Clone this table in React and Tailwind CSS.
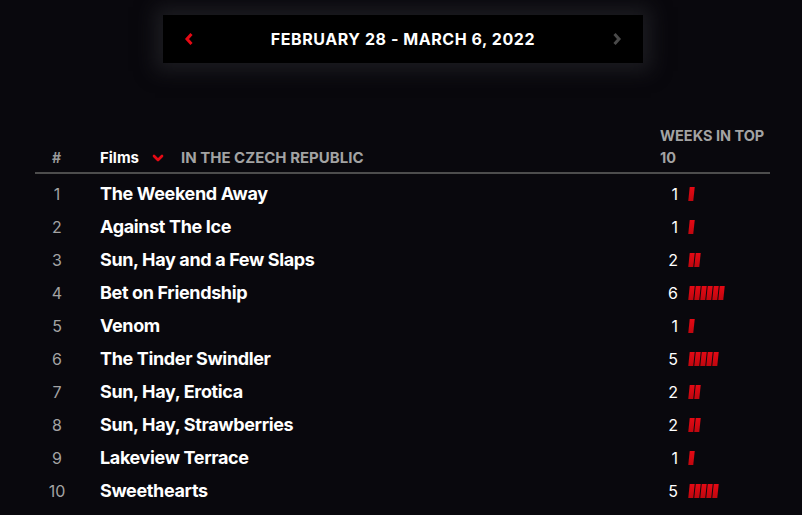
import { ChevronDown } from "lucide-react";

const rows = [
  { rank: 1, title: "The Weekend Away", weeks: 1 },
  { rank: 2, title: "Against The Ice", weeks: 1 },
  { rank: 3, title: "Sun, Hay and a Few Slaps", weeks: 2 },
  { rank: 4, title: "Bet on Friendship", weeks: 6 },
  { rank: 5, title: "Venom", weeks: 1 },
  { rank: 6, title: "The Tinder Swindler", weeks: 5 },
  { rank: 7, title: "Sun, Hay, Erotica", weeks: 2 },
  { rank: 8, title: "Sun, Hay, Strawberries", weeks: 2 },
  { rank: 9, title: "Lakeview Terrace", weeks: 1 },
  { rank: 10, title: "Sweethearts", weeks: 5 },
];

function Arrow({ dir, className }) {
  return (
    <svg width="10" height="14" viewBox="0 0 10 14" className={className}>
      <path
        d={dir === "left" ? "M7.5 2 L3 7 L7.5 12" : "M2.5 2 L7 7 L2.5 12"}
        fill="none"
        stroke="currentColor"
        strokeWidth="3"
        strokeLinejoin="miter"
      />
    </svg>
  );
}

function WeekBars({ count }) {
  return (
    <div className="flex items-center gap-[1px] pl-[2px]">
      {Array.from({ length: count }).map((_, i) => (
        <span key={i} className="block h-[14px] w-[5px] -skew-x-[6deg] bg-gradient-to-b from-[#e50914] to-[#c0070f]" />
      ))}
    </div>
  );
}

export default function App() {
  return (
    <div className="h-[515px] w-full overflow-hidden bg-[#09080d] font-['Inter',sans-serif] text-white">
      <div className="flex justify-center pl-[4px] pt-[15px]">
        <div className="flex h-[48px] w-[480px] items-center justify-between bg-black px-[21px] shadow-[0_0_18px_8px_rgba(30,30,34,0.9)]">
          <Arrow dir="left" className="text-[#e50914]" />
          <span className="text-[16px] font-bold tracking-[0.035em]">FEBRUARY 28 - MARCH 6, 2022</span>
          <Arrow dir="right" className="text-[#4a4a4a]" />
        </div>
      </div>

      <div className="mx-[35px] mt-[62px] w-[735px]">
        <div className="grid grid-cols-[65px_1fr_110px] items-end border-b-2 border-[#4d4d4d] pb-[3px] text-[15px] font-bold leading-[22px]">
          <span className="pl-[17px] text-[14px] text-[#9a9a9a]">#</span>
          <div className="flex items-center">
            <span className="text-white">Films</span>
            <ChevronDown size={16} strokeWidth={4} className="ml-[11px] text-[#e50914]" />
            <span className="ml-[15px] text-[#a3a3a3]">IN THE CZECH REPUBLIC</span>
          </div>
          <span className="text-[14.5px] text-[#a3a3a3]">WEEKS IN TOP 10</span>
        </div>

        <div className="pt-[3px]">
          {rows.map((r) => (
            <div key={r.rank} className="grid h-[33px] grid-cols-[65px_1fr_110px] items-center">
              <span className="w-[44px] text-center text-[16px] text-[#a3a3a3]">{r.rank}</span>
              <span className="text-[18px] font-bold tracking-[-0.02em]">{r.title}</span>
              <div className="flex items-center">
                <span className="w-[18px] text-right text-[16px]">{r.weeks}</span>
                <span className="w-[9px]" />
                <WeekBars count={r.weeks} />
              </div>
            </div>
          ))}
        </div>
      </div>
    </div>
  );
}
